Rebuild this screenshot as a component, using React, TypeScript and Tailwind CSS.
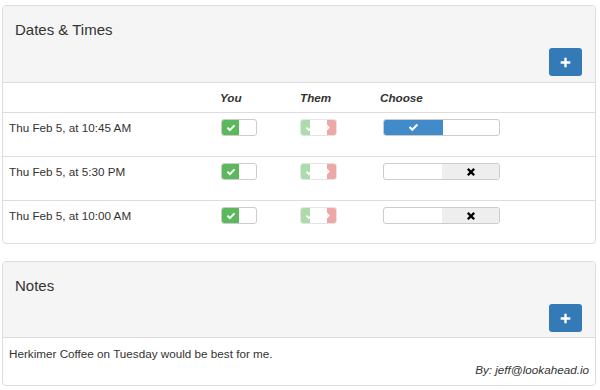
import React from "react";

const font = { fontFamily: '"Liberation Sans", Arial, Helvetica, sans-serif' };

const Check = ({ className }: { className?: string }) => (
    <svg viewBox="0 0 16 16" className={className} fill="currentColor">
        <path d="M6.2 13.4 1.2 8.4l2.2-2.2 2.8 2.8 6.4-6.4 2.2 2.2z" />
    </svg>
);

const Times = ({ className }: { className?: string }) => (
    <svg viewBox="0 0 16 16" className={className} fill="currentColor">
        <path d="M4.2 1.6 8 5.4l3.8-3.8 2.6 2.6L10.6 8l3.8 3.8-2.6 2.6L8 10.6l-3.8 3.8-2.6-2.6L5.4 8 1.6 4.2z" />
    </svg>
);

const PlusButton: React.FC = () => (
    <button className="flex h-[28px] w-[33px] items-center justify-center rounded-[3px] bg-[#337ab7] text-white">
        <svg viewBox="0 0 16 16" className="h-[11px] w-[11px]" fill="currentColor">
            <path d="M6.3 1h3.4v5.3H15v3.4H9.7V15H6.3V9.7H1V6.3h5.3z" />
        </svg>
    </button>
);

const YouToggle: React.FC = () => (
    <div className="flex h-[17px] w-[36px] overflow-hidden rounded-[3px] border border-[#ccc] bg-white">
        <div className="flex w-[17px] items-center justify-center bg-[#5cb85c] text-white">
            <Check className="h-[10px] w-[10px]" />
        </div>
    </div>
);

const ThemToggle: React.FC = () => (
    <div className="flex h-[17px] w-[37px] overflow-hidden rounded-[3px] border border-[#ccc] bg-white opacity-50">
        <div className="flex w-[9px] items-center justify-end overflow-hidden bg-[#5cb85c] text-white">
            <Check className="h-[10px] w-[10px] shrink-0 translate-x-[5px]" />
        </div>
        <div className="flex-1" />
        <div className="flex w-[9px] items-center justify-start overflow-hidden bg-[#d9534f] text-white">
            <svg viewBox="0 0 16 16" className="h-[9px] w-[9px] shrink-0 -translate-x-[3px]" fill="currentColor">
                <path d="M4 1.5 10.5 8 4 14.5l-2-2L6.5 8 2 3.5z" />
            </svg>
        </div>
    </div>
);

const ChooseToggle = ({ on }: { on: boolean }) => (
    <div className="flex h-[17px] w-[117px] overflow-hidden rounded-[3px] border border-[#ccc] bg-white">
        {on ? (
            <>
                <div className="flex w-[59px] items-center justify-center bg-[#428bca] text-white">
                    <Check className="h-[11px] w-[11px]" />
                </div>
                <div className="flex-1" />
            </>
        ) : (
            <>
                <div className="w-[58px]" />
                <div className="flex flex-1 items-center justify-center bg-[#eeeeee] text-black">
                    <Times className="h-[10px] w-[10px]" />
                </div>
            </>
        )}
    </div>
);

const rows = [
    { label: "Thu Feb 5, at 10:45 AM", chosen: true },
    { label: "Thu Feb 5, at 5:30 PM", chosen: false },
    { label: "Thu Feb 5, at 10:00 AM", chosen: false },
];

const App: React.FC = () => {
    return (
        <div className="h-[390px] w-[600px] bg-white pl-[2px] pr-[4px] pt-[5px] text-[#333]" style={font}>
            {/* Dates & Times */}
            <div className="overflow-hidden rounded-[4px] border border-[#ddd]">
                <div className="border-b border-[#ddd] bg-[#f5f5f5] pl-[12px] pr-[13px] pt-[15px] pb-[6px]">
                    <h3 className="text-[15px] leading-[18px]">Dates &amp; Times</h3>
                    <div className="mt-[9px] flex justify-end">
                        <PlusButton />
                    </div>
                </div>
                <div className="grid h-[30px] grid-cols-[211px_80px_80px_1fr] items-center border-b border-[#ddd] pl-[6px] text-[11.7px] font-bold italic">
                    <div />
                    <div>You</div>
                    <div>Them</div>
                    <div>Choose</div>
                </div>
                {rows.map((row, i) => (
                    <div
                        key={row.label}
                        className={`grid grid-cols-[211px_80px_80px_1fr] pl-[6px] pt-[6px] text-[11.7px] ${i < rows.length - 1 ? "h-[44px] border-b border-[#ddd]" : "h-[42px]"}`}
                    >
                        <div className="leading-[17px]">{row.label}</div>
                        <div className="pl-[1px]"><YouToggle /></div>
                        <div><ThemToggle /></div>
                        <div className="pl-[3px]"><ChooseToggle on={row.chosen} /></div>
                    </div>
                ))}
            </div>

            {/* Notes */}
            <div className="mt-[17px] overflow-hidden rounded-[4px] border border-[#ddd]">
                <div className="border-b border-[#ddd] bg-[#f5f5f5] pl-[12px] pr-[13px] pt-[15px] pb-[5px]">
                    <h3 className="text-[15px] leading-[18px]">Notes</h3>
                    <div className="mt-[9px] flex justify-end">
                        <PlusButton />
                    </div>
                </div>
                <div className="px-[6px] pt-[8px] pb-[7px] text-[11.7px]">
                    <p className="leading-[16px]">Herkimer Coffee on Tuesday would be best for me.</p>
                    <p className="text-right italic leading-[16px]">By: jeff@lookahead.io</p>
                </div>
            </div>
        </div>
    );
};

export default App;
